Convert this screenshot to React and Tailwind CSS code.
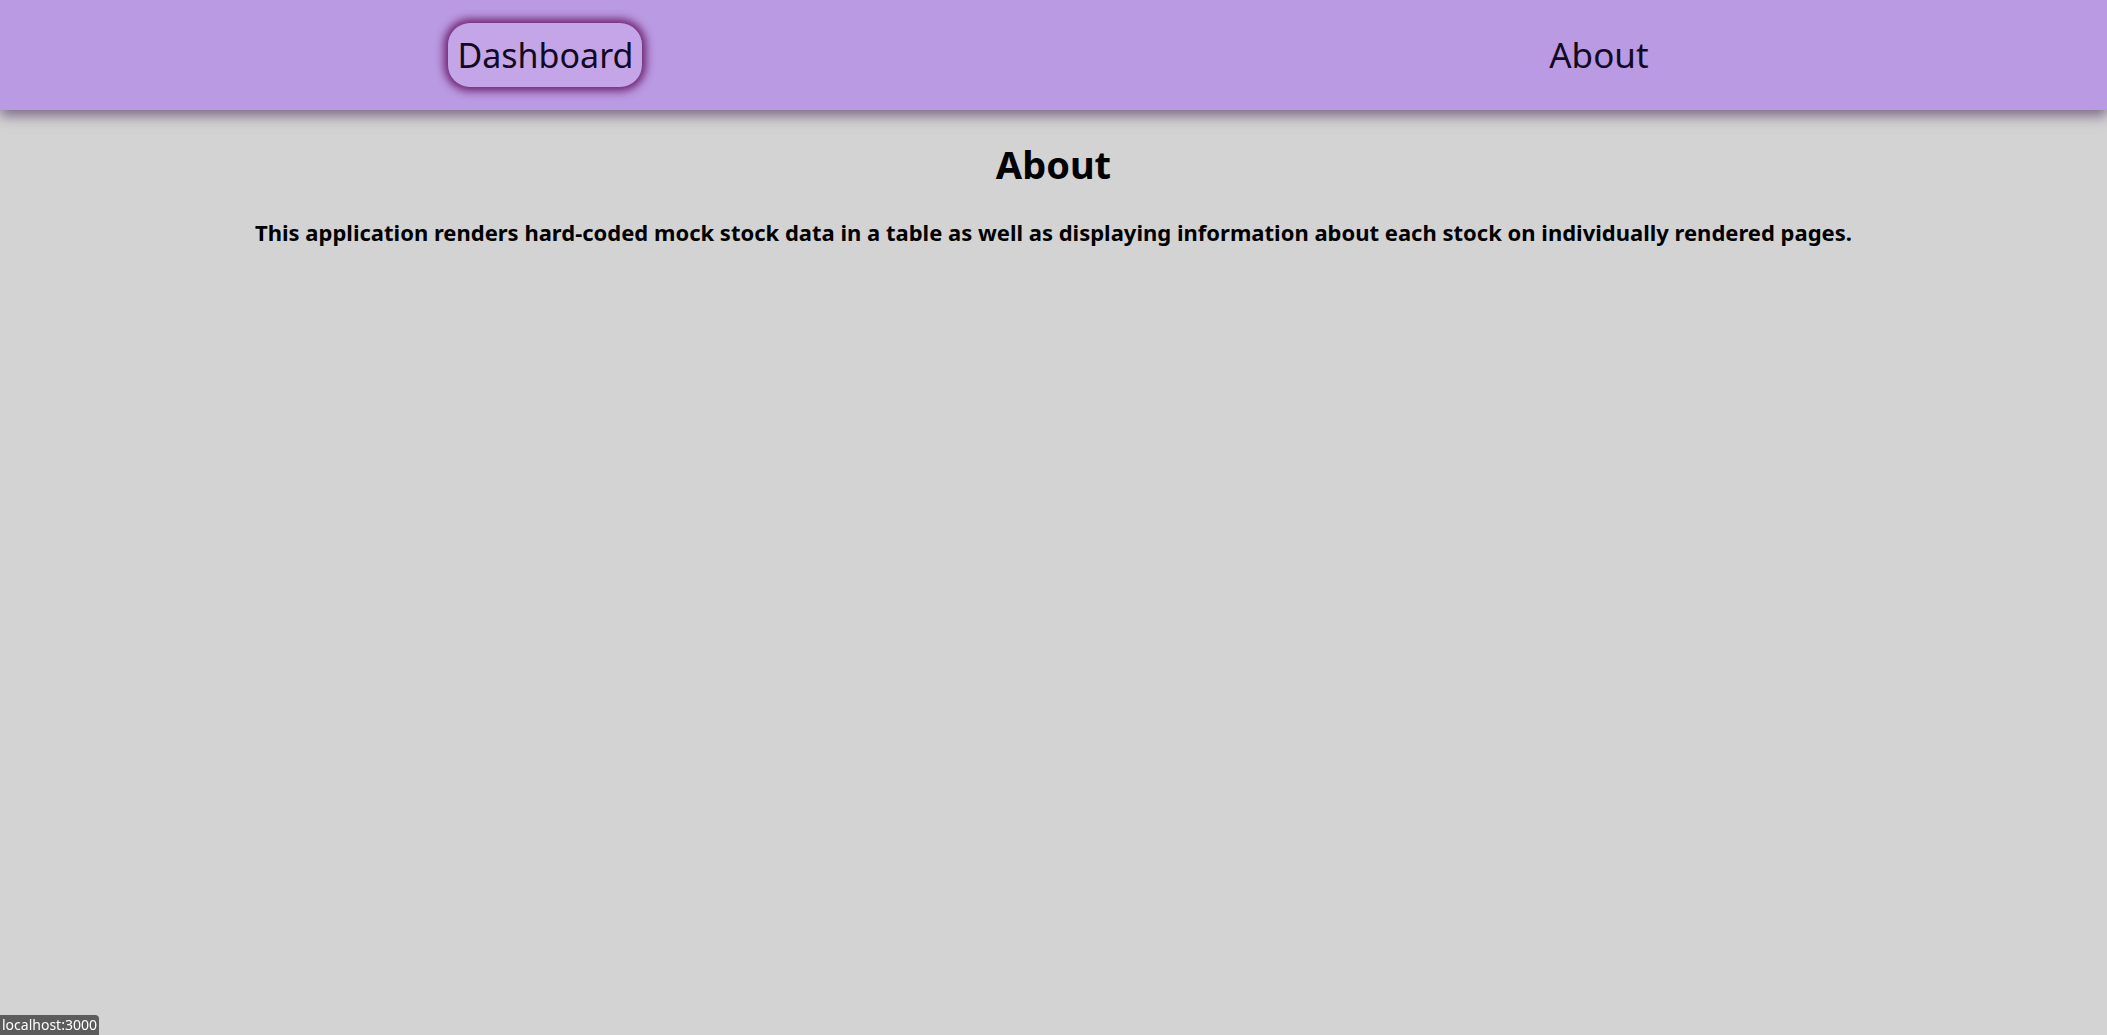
export default function App() {
  return (
    <div className="min-h-screen bg-[#d3d3d3] font-['Noto_Sans',sans-serif] text-black">
      <nav className="flex h-[110px] items-center justify-around bg-[#ba9ae2] shadow-[0_6px_12px_rgba(70,40,90,0.6)]">
        <a className="rounded-[22px] bg-[#c4a6e8] px-[9px] py-[6px] text-[34px] leading-[52px] text-[#120a20] shadow-[0_0_8px_4px_#6e226e]">
          Dashboard
        </a>
        <a className="px-[10px] text-[35px] leading-[52px] text-[#120a20]">About</a>
      </nav>
      <main className="flex flex-col items-center pt-[26px]">
        <h1 className="text-[38px] font-bold leading-[56px]">About</h1>
        <p className="mt-[25px] text-[22px] font-bold leading-[30px]">
          This application renders hard-coded mock stock data in a table as well as displaying information about each stock on individually rendered pages.
        </p>
      </main>
      <div className="fixed bottom-0 left-0 rounded-tr-[4px] bg-[#5c5c5c] px-[2px] text-[14px] leading-[20px] text-white">
        localhost:3000
      </div>
    </div>
  );
}
